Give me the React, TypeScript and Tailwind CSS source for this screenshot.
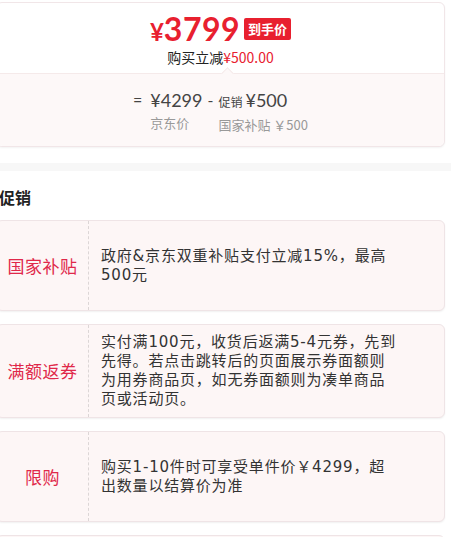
import React from 'react'

const promos = [
  { label: '国家补贴', text: '政府&京东双重补贴支付立减15%，最高500元' },
  {
    label: '满额返券',
    text: '实付满100元，收货后返满5-4元券，先到先得。若点击跳转后的页面展示券面额则为用券商品页，如无券面额则为凑单商品页或活动页。',
  },
  { label: '限购', text: '购买1-10件时可享受单件价￥4299，超出数量以结算价为准' },
]

function PriceCard() {
  return (
    <div className="mt-[2px] mr-[6px] -ml-[4px] rounded-md border border-[#f1e6e8] bg-white shadow-[0_1px_2px_rgba(0,0,0,0.05)]">
      <div className="flex flex-col items-center pt-[10px] pb-[7px]">
        <div className="flex items-center gap-[4px]">
          <span className="text-[#e8202f] font-bold leading-none font-['Lato','Noto_Sans',sans-serif]">
            <span className="text-[24px]">¥</span>
            <span className="text-[32px] tracking-[0.5px]">3799</span>
          </span>
          <span className="rounded-[2px] bg-[#e8202f] px-[4px] py-[2px] text-[13px] leading-[18px] font-bold text-white">
            到手价
          </span>
        </div>
        <div className="mt-[3px] text-[14px] leading-[18px] text-[#222]">
          购买立减<span className="text-[#e8202f]">¥500.00</span>
        </div>
      </div>
      <div className="relative border-t border-[#f5eaea] bg-[#fdf8f8] pt-[13px] pb-[12px] rounded-b-md">
        <div className="absolute -top-[5px] left-[226px] h-[9px] w-[9px] rotate-45 border-l border-t border-[#f5eaea] bg-[#fdf8f8]" />
        <div className="flex justify-center text-[#444] font-['Lato','Noto_Sans',sans-serif]">
          <div className="text-[16px] leading-[26px] mr-[8px]">=</div>
          <div className="flex flex-col">
            <span className="text-[18px] leading-[26px]">¥4299</span>
            <span className="mt-[1px] text-[13px] leading-[18px] text-[#999] font-['Noto_Sans_CJK_SC',sans-serif]">京东价</span>
          </div>
          <div className="text-[16px] leading-[26px] mx-[5px]">-</div>
          <div className="flex flex-col">
            <span className="leading-[26px] whitespace-nowrap">
              <span className="text-[12px] mr-[3px] font-['Noto_Sans_CJK_SC',sans-serif]">促销</span>
              <span className="text-[18px]">¥500</span>
            </span>
            <span className="mt-[1px] text-[13px] leading-[18px] text-[#999] whitespace-nowrap font-['Noto_Sans_CJK_SC',sans-serif]">
              国家补贴 ￥500
            </span>
          </div>
        </div>
      </div>
    </div>
  )
}

export default function App() {
  return (
    <div className="w-[451px] h-[537px] overflow-hidden bg-white font-['Noto_Sans_CJK_SC','Noto_Sans',sans-serif]">
      <PriceCard />
      <div className="mt-[16px] h-[8px] bg-[#f7f7f7]" />
      <div className="mt-[15px] -ml-[1px] text-[16px] leading-[22px] font-bold text-[#222]">促销</div>
      <div className="mt-[12px] flex flex-col gap-[13px]">
        {promos.map((p) => (
          <div
            key={p.label}
            className="-ml-[4px] mr-[6px] flex min-h-[91px] rounded-md border border-[#efe4e6] bg-[#fdf6f6] shadow-[0_1px_2px_rgba(0,0,0,0.06)]"
          >
            <div className="flex w-[92px] shrink-0 items-center justify-center border-r border-dashed border-[#dcd6d6] text-[17px] tracking-[0.5px] text-[#e0284a]">
              {p.label}
            </div>
            <div className="flex flex-1 items-center py-[8px] pl-[12px] pr-[47px] font-['DejaVu_Sans','Noto_Sans_CJK_SC',sans-serif] text-[15px] tracking-[0.8px] leading-[19px] text-[#333]">
              {p.text}
            </div>
          </div>
        ))}
        <div className="-ml-[4px] mr-[6px] h-[20px] rounded-md border border-[#efe4e6] bg-[#fdf6f6]" />
      </div>
    </div>
  )
}
